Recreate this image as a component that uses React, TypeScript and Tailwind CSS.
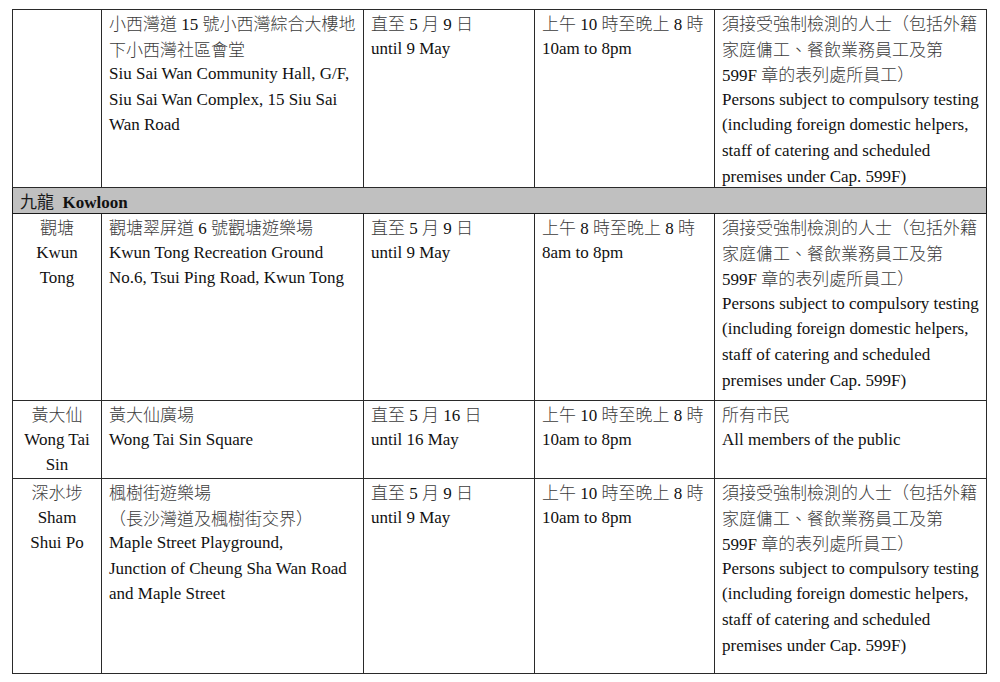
import React from "react";

const CJK = /([\u2e80-\u9fff\u3000-\u303f\uff00-\uffef\u3001]+)/;

function Line({ s, center = false }: { s: string; center?: boolean }) {
  const parts = s.split(CJK);
  return (
    <div className={`whitespace-nowrap h-[25.6px] ${center ? "text-center" : ""}`}>
      {parts.map((p, i) =>
        i % 2 === 1 ? (
          <span key={i} className="font-['Noto_Sans_CJK_TC',sans-serif] font-light text-[#3c3c3c] align-baseline">
            {p}
          </span>
        ) : (
          <span key={i}>{p}</span>
        )
      )}
    </div>
  );
}

function Cell({ lines, center = false }: { lines: string[]; center?: boolean }) {
  return (
    <td className="border border-[#2a2a2a] align-top px-[7px] py-0">
      <div className="-mb-[4px]">
        {lines.map((l, i) => (
          <Line key={i} s={l} center={center} />
        ))}
      </div>
    </td>
  );
}

const testing = [
  "須接受強制檢測的人士（包括外籍",
  "家庭傭工、餐飲業務員工及第",
  "599F 章的表列處所員工）",
  "Persons subject to compulsory testing",
  "(including foreign domestic helpers,",
  "staff of catering and scheduled",
  "premises under Cap. 599F)",
];

export default function App() {
  return (
    <div className="w-[1000px] h-[682px] bg-white pt-[9px] pl-[12px] overflow-hidden">
      <table className="table-fixed border-collapse text-[17px] leading-[25.6px] text-[#111] font-['Liberation_Serif','Noto_Sans_CJK_TC',serif] w-[974px]">
        <colgroup>
          <col className="w-[89px]" />
          <col className="w-[262px]" />
          <col className="w-[171px]" />
          <col className="w-[180px]" />
          <col className="w-[272px]" />
        </colgroup>
        <tbody>
          <tr className="h-[178px]">
            <Cell lines={[]} />
            <Cell
              lines={[
                "小西灣道 15 號小西灣綜合大樓地",
                "下小西灣社區會堂",
                "Siu Sai Wan Community Hall, G/F,",
                "Siu Sai Wan Complex, 15 Siu Sai",
                "Wan Road",
              ]}
            />
            <Cell lines={["直至 5 月 9 日", "until 9 May"]} />
            <Cell lines={["上午 10 時至晚上 8 時", "10am to 8pm"]} />
            <Cell lines={testing} />
          </tr>
          <tr className="h-[26px] bg-[#c0c0c0]">
            <td colSpan={5} className="border border-[#1a1a1a] px-[7px] py-0 align-middle">
              <div className="whitespace-nowrap h-[24px] leading-[24px]">
                <span className="font-['Noto_Sans_CJK_TC',sans-serif] text-[#1a1a1a]">九龍</span>
                <span className="font-bold">{"\u00a0 Kowloon"}</span>
              </div>
            </td>
          </tr>
          <tr className="h-[187px]">
            <Cell center lines={["觀塘", "Kwun", "Tong"]} />
            <Cell
              lines={[
                "觀塘翠屏道 6 號觀塘遊樂場",
                "Kwun Tong Recreation Ground",
                "No.6, Tsui Ping Road, Kwun Tong",
              ]}
            />
            <Cell lines={["直至 5 月 9 日", "until 9 May"]} />
            <Cell lines={["上午 8 時至晚上 8 時", "8am to 8pm"]} />
            <Cell lines={testing} />
          </tr>
          <tr className="h-[78px]">
            <Cell center lines={["黃大仙", "Wong Tai", "Sin"]} />
            <Cell lines={["黃大仙廣場", "Wong Tai Sin Square"]} />
            <Cell lines={["直至 5 月 16 日", "until 16 May"]} />
            <Cell lines={["上午 10 時至晚上 8 時", "10am to 8pm"]} />
            <Cell lines={["所有市民", "All members of the public"]} />
          </tr>
          <tr className="h-[195px]">
            <Cell center lines={["深水埗", "Sham", "Shui Po"]} />
            <Cell
              lines={[
                "楓樹街遊樂場",
                "（長沙灣道及楓樹街交界）",
                "Maple Street Playground,",
                "Junction of Cheung Sha Wan Road",
                "and Maple Street",
              ]}
            />
            <Cell lines={["直至 5 月 9 日", "until 9 May"]} />
            <Cell lines={["上午 10 時至晚上 8 時", "10am to 8pm"]} />
            <Cell lines={testing} />
          </tr>
        </tbody>
      </table>
    </div>
  );
}
